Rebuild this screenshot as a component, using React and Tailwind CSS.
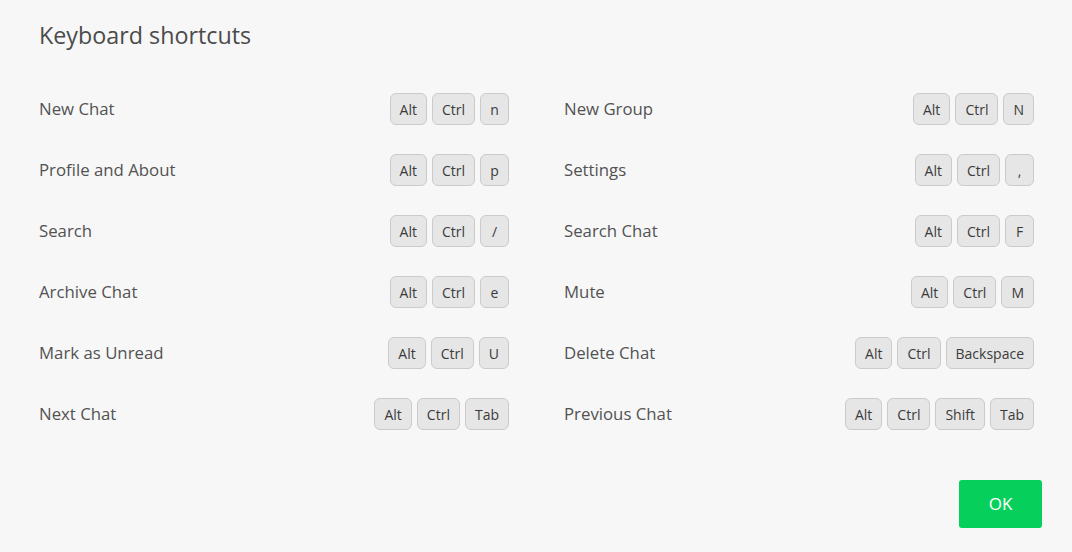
import React from "react";

const left = [
  ["New Chat", ["Alt", "Ctrl", "n"]],
  ["Profile and About", ["Alt", "Ctrl", "p"]],
  ["Search", ["Alt", "Ctrl", "/"]],
  ["Archive Chat", ["Alt", "Ctrl", "e"]],
  ["Mark as Unread", ["Alt", "Ctrl", "U"]],
  ["Next Chat", ["Alt", "Ctrl", "Tab"]],
];

const right = [
  ["New Group", ["Alt", "Ctrl", "N"]],
  ["Settings", ["Alt", "Ctrl", ","]],
  ["Search Chat", ["Alt", "Ctrl", "F"]],
  ["Mute", ["Alt", "Ctrl", "M"]],
  ["Delete Chat", ["Alt", "Ctrl", "Backspace"]],
  ["Previous Chat", ["Alt", "Ctrl", "Shift", "Tab"]],
];

function Key({ k }) {
  return (
    <span className="h-[32px] min-w-[29px] px-[9px] flex items-center justify-center rounded-[6px] bg-[#e6e6e6] border border-[#cbcbcb] text-[14px] text-[#3b3b3b]">
      {k}
    </span>
  );
}

function Row({ label, keys }) {
  return (
    <div className="flex items-center justify-between h-[32px]">
      <span className="text-[16.8px] text-[#525252]">{label}</span>
      <div className="flex gap-[5px]">
        {keys.map((k) => (
          <Key key={k} k={k} />
        ))}
      </div>
    </div>
  );
}

export default function App() {
  return (
    <div className="w-[1072px] h-[552px] bg-[#f7f7f7] flex flex-col pl-[39px] pr-[38px] pt-[18px] pb-[24px] font-['Open_Sans',sans-serif]">
      <h1 className="text-[23.3px] leading-[34px] text-[#4b4b4b]">Keyboard shortcuts</h1>
      <div className="mt-[41px] grid grid-cols-2 gap-x-[55px]">
        {[left, right].map((col, i) => (
          <div key={i} className="flex flex-col gap-[29px]">
            {col.map(([label, keys]) => (
              <Row key={label} label={label} keys={keys} />
            ))}
          </div>
        ))}
      </div>
      <div className="mt-auto flex justify-end -mr-[8px]">
        <button className="w-[83px] h-[48px] rounded-[3px] bg-[#06cf5c] text-white text-[17px]">OK</button>
      </div>
    </div>
  );
}
